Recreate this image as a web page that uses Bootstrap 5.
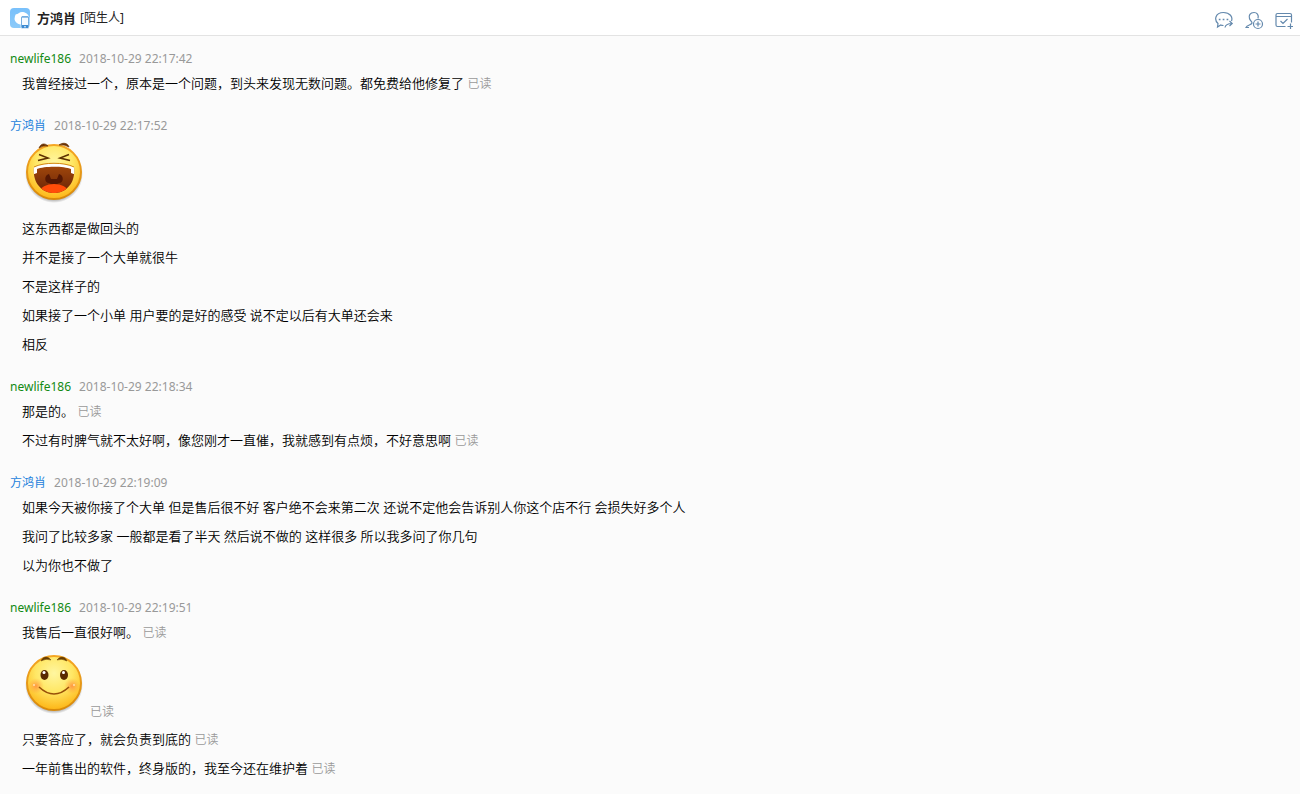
<!DOCTYPE html>
<html lang="zh-CN">
<head>
<meta charset="utf-8">
<meta name="viewport" content="width=device-width, initial-scale=1">
<title>方鸿肖</title>
<link href="https://cdn.jsdelivr.net/npm/bootstrap@5.3.0/dist/css/bootstrap.min.css" rel="stylesheet">
<style>
  body { background: #fbfbfb; color: #000; font-family: "Noto Sans", "Noto Sans CJK SC", sans-serif; font-size: 13px; line-height: 20px; }
  .chat-bar { min-height: 36px; padding: 0 6px 0 10px; background: #fff; border-bottom: 1px solid #e3e3e3; }
  .chat-bar h1 { font-size: 13px; line-height: 20px; margin-left: 7px; color: #222; }
  .relation, .sender, .seen { font-size: 12px; }
  .relation { color: #222; }
  .tool { width: 20px; height: 20px; color: #6489ad; }
  .tools { gap: 10px; padding-top: 4px; }
  .chat-log { padding: 13px 10px 0; }
  .turn { margin-bottom: 18px; }
  .sender { gap: 8px; line-height: 20px; }
  .me { color: #138a13; }
  .peer { color: #1e82dc; }
  .sender time, .seen { color: #999; }
  .lines { padding-left: 12px; font-weight: 350; }
  .lines p { line-height: 29px; }
  .lines .sticker { height: 78px; gap: 4px; }
  .sticker svg { margin-bottom: 10px; flex: none; }
</style>
</head>
<body>
<header class="chat-bar d-flex align-items-center justify-content-between">
  <div class="d-flex align-items-center">
    <svg width="20" height="22" viewBox="0 0 20 22" aria-hidden="true">
      <defs><linearGradient id="sky" x1="0" y1="0" x2="0" y2="1"><stop stop-color="#79c0fb"/><stop offset="1" stop-color="#8ccaf9"/></linearGradient></defs>
      <rect y="1" width="20" height="20" rx="4" fill="url(#sky)"/>
      <path d="M6 7C8 8 9 5 12 5C15 5 18 7 18.500 9H12V17.500C8 17.500 5 15.500 4.500 12Q4.500 9 6 7Z" fill="#fff"/>
      <rect x="11" y="9" width="8" height="12.500" rx="1.500" fill="#3b8ad2" stroke="#fff" stroke-width=".6"/>
      <path d="M12 10.500H18V18H12Z" fill="#f5faff"/><circle cx="15" cy="19.700" r=".8" fill="#fff"/>
    </svg>
    <h1 class="fw-bold mb-0">方鸿肖</h1>
    <span class="relation ms-1">[陌生人]</span>
  </div>
  <div class="tools d-flex">
    <button type="button" class="tool btn p-0 border-0 d-flex" aria-label="转发消息">
      <svg width="20" height="20" viewBox="0 0 20 20" fill="none" stroke="currentColor" stroke-width="1.200">
        <path d="M9.500 15.500C8.500 15.500 7.500 15.400 6.700 15L3.500 17L4 13.500C0 10 1 2.500 9.500 2.500C16 2.500 19 7 17.500 11"/>
        <path d="M11 17.500C11.500 14.500 13.500 13.500 18 13.500M15.500 11L18.200 13.500L15.500 16"/>
        <path d="M4.800 9.500H6.500M8.700 9.500H10.400M12.600 9.500H14.300" stroke-width="1.600"/>
      </svg>
    </button>
    <button type="button" class="tool btn p-0 border-0 d-flex" aria-label="添加好友">
      <svg width="20" height="20" viewBox="0 0 20 20" fill="none" stroke="currentColor" stroke-width="1.200">
        <path d="M14 8.500C15 5 13 2.500 10 2.500C6 2.500 4.500 5.500 5.500 8.500C6 10.500 8 11.500 8 13C7.500 15 3 15 2 17.500H5"/>
        <circle cx="14" cy="14" r="4.500"/><path d="M14 11.500V16.500M11.500 14H16.500"/>
      </svg>
    </button>
    <button type="button" class="tool btn p-0 border-0 d-flex" aria-label="创建任务">
      <svg width="20" height="20" viewBox="0 0 20 20" fill="none" stroke="currentColor" stroke-width="1.200">
        <path d="M11.500 16.500H3.500Q2 16.500 2 15V5Q2 3.500 3.500 3.500H16Q17.500 3.500 17.500 5V12.500M2 6.500H17.500M6.500 11L9 13.500L13.500 9"/>
        <path d="M16.500 13.500V19M13.500 16.500H19"/>
      </svg>
    </button>
  </div>
</header>

<main class="chat-log">
  <section class="turn">
    <div class="sender d-flex"><span class="me">newlife186</span><time>2018-10-29 22:17:42</time></div>
    <div class="lines">
      <p class="mb-0">我曾经接过一个，原本是一个问题，到头来发现无数问题。都免费给他修复了 <span class="seen">已读</span></p>
    </div>
  </section>

  <section class="turn">
    <div class="sender d-flex"><span class="peer">方鸿肖</span><time>2018-10-29 22:17:52</time></div>
    <div class="lines">
      <div class="sticker d-flex align-items-end">
        <svg width="64" height="64" viewBox="0 0 64 64" role="img" aria-label="大笑">
          <defs>
            <radialGradient id="skin" cx=".5" cy=".32" r=".68"><stop stop-color="#fff6a0"/><stop offset=".5" stop-color="#ffe765"/><stop offset="1" stop-color="#fdb515"/></radialGradient>
            <linearGradient id="rim" x1="0" y1="0" x2="0" y2="1"><stop stop-color="#f5a623"/><stop offset="1" stop-color="#d98a0a"/></linearGradient>
            <radialGradient id="shade"><stop offset=".88" stop-color="#000" stop-opacity=".3"/><stop offset="1" stop-color="#000" stop-opacity="0"/></radialGradient>
            <linearGradient id="throat" x1="0" y1="0" x2="0" y2="1"><stop stop-color="#a84c0c"/><stop offset="1" stop-color="#682206"/></linearGradient>
            <clipPath id="mouth"><path d="M12 27C22 22 42 22 52 27C54 43 44 53 32 53C20 53 10 43 12 27Z"/></clipPath>
          </defs>
          <circle cx="32" cy="34" r="29" fill="url(#shade)"/>
          <circle cx="32" cy="32" r="27" fill="url(#skin)" stroke="url(#rim)" stroke-width="2"/>
          <path d="M17 8C19 3 23 3 26 6Q21 5 17 8ZM37 5C41 2 46 3 47 7Q42 4 37 5Z" fill="#693000" stroke="#693000" stroke-width=".7"/>
          <path d="M17 14.500L26 18L16 20.500M47 14.500L38 18L48 20.500" fill="none" stroke="#5d3100" stroke-width="1.600"/>
          <g clip-path="url(#mouth)">
            <rect x="10" y="22" width="44" height="32" fill="url(#throat)"/>
            <path d="M27 34C22 35 22 43 27 43Q32 46 37 43C42 43 42 35 37 34L35 39H29Z" fill="#551703"/>
            <ellipse cx="32" cy="52" rx="14" ry="8" fill="#ff4c09"/>
            <path d="M10 21H54V35L49 33V29C42 26 22 26 15 29V33L10 35Z" fill="#fff"/>
          </g>
          <path d="M12 27C22 22 42 22 52 27" fill="none" stroke="#d68b0d"/>
        </svg>
      </div>
      <p class="mb-0">这东西都是做回头的</p>
      <p class="mb-0">并不是接了一个大单就很牛</p>
      <p class="mb-0">不是这样子的</p>
      <p class="mb-0">如果接了一个小单 用户要的是好的感受 说不定以后有大单还会来</p>
      <p class="mb-0">相反</p>
    </div>
  </section>

  <section class="turn">
    <div class="sender d-flex"><span class="me">newlife186</span><time>2018-10-29 22:18:34</time></div>
    <div class="lines">
      <p class="mb-0">那是的。 <span class="seen">已读</span></p>
      <p class="mb-0">不过有时脾气就不太好啊，像您刚才一直催，我就感到有点烦，不好意思啊 <span class="seen">已读</span></p>
    </div>
  </section>

  <section class="turn">
    <div class="sender d-flex"><span class="peer">方鸿肖</span><time>2018-10-29 22:19:09</time></div>
    <div class="lines">
      <p class="mb-0">如果今天被你接了个大单 但是售后很不好 客户绝不会来第二次 还说不定他会告诉别人你这个店不行 会损失好多个人</p>
      <p class="mb-0">我问了比较多家 一般都是看了半天 然后说不做的 这样很多 所以我多问了你几句</p>
      <p class="mb-0">以为你也不做了</p>
    </div>
  </section>

  <section>
    <div class="sender d-flex"><span class="me">newlife186</span><time>2018-10-29 22:19:51</time></div>
    <div class="lines">
      <p class="mb-0">我售后一直很好啊。 <span class="seen">已读</span></p>
      <div class="sticker d-flex align-items-end">
        <svg width="64" height="64" viewBox="0 0 64 64" role="img" aria-label="微笑">
          <defs><radialGradient id="blush"><stop stop-color="#ff7a3c" stop-opacity=".7"/><stop offset="1" stop-color="#ff9a3c" stop-opacity="0"/></radialGradient></defs>
          <circle cx="32" cy="34" r="29" fill="url(#shade)"/>
          <circle cx="32" cy="32" r="27" fill="url(#skin)" stroke="url(#rim)" stroke-width="2"/>
          <path d="M19 10C21 5 26 5 29 9Q24 7 19 10ZM35 9C38 5 43 5 45 10Q40 7 35 9Z" fill="#693d00" stroke="#693d00" stroke-width=".5"/>
          <ellipse cx="22.500" cy="24" rx="4" ry="5" fill="#5a2a00"/><ellipse cx="42" cy="24" rx="4" ry="5" fill="#5a2a00"/>
          <circle cx="22" cy="21.500" r="1.500" fill="#fff"/><circle cx="41.500" cy="21.500" r="1.500" fill="#fff"/>
          <circle cx="14" cy="35" r="8" fill="url(#blush)"/><circle cx="50" cy="35" r="8" fill="url(#blush)"/>
          <path d="M17 36Q32 50 47 36" fill="none" stroke="#985009" stroke-width="1.600"/>
          <circle cx="12" cy="34" r="1" fill="#ffe1b0"/><circle cx="52" cy="34" r="1" fill="#ffe1b0"/>
        </svg>
        <span class="seen lh-base mb-1">已读</span>
      </div>
      <p class="mb-0">只要答应了，就会负责到底的 <span class="seen">已读</span></p>
      <p class="mb-0">一年前售出的软件，终身版的，我至今还在维护着 <span class="seen">已读</span></p>
    </div>
  </section>
</main>
<script src="https://cdn.jsdelivr.net/npm/bootstrap@5.3.0/dist/js/bootstrap.bundle.min.js"></script>
</body>
</html>
